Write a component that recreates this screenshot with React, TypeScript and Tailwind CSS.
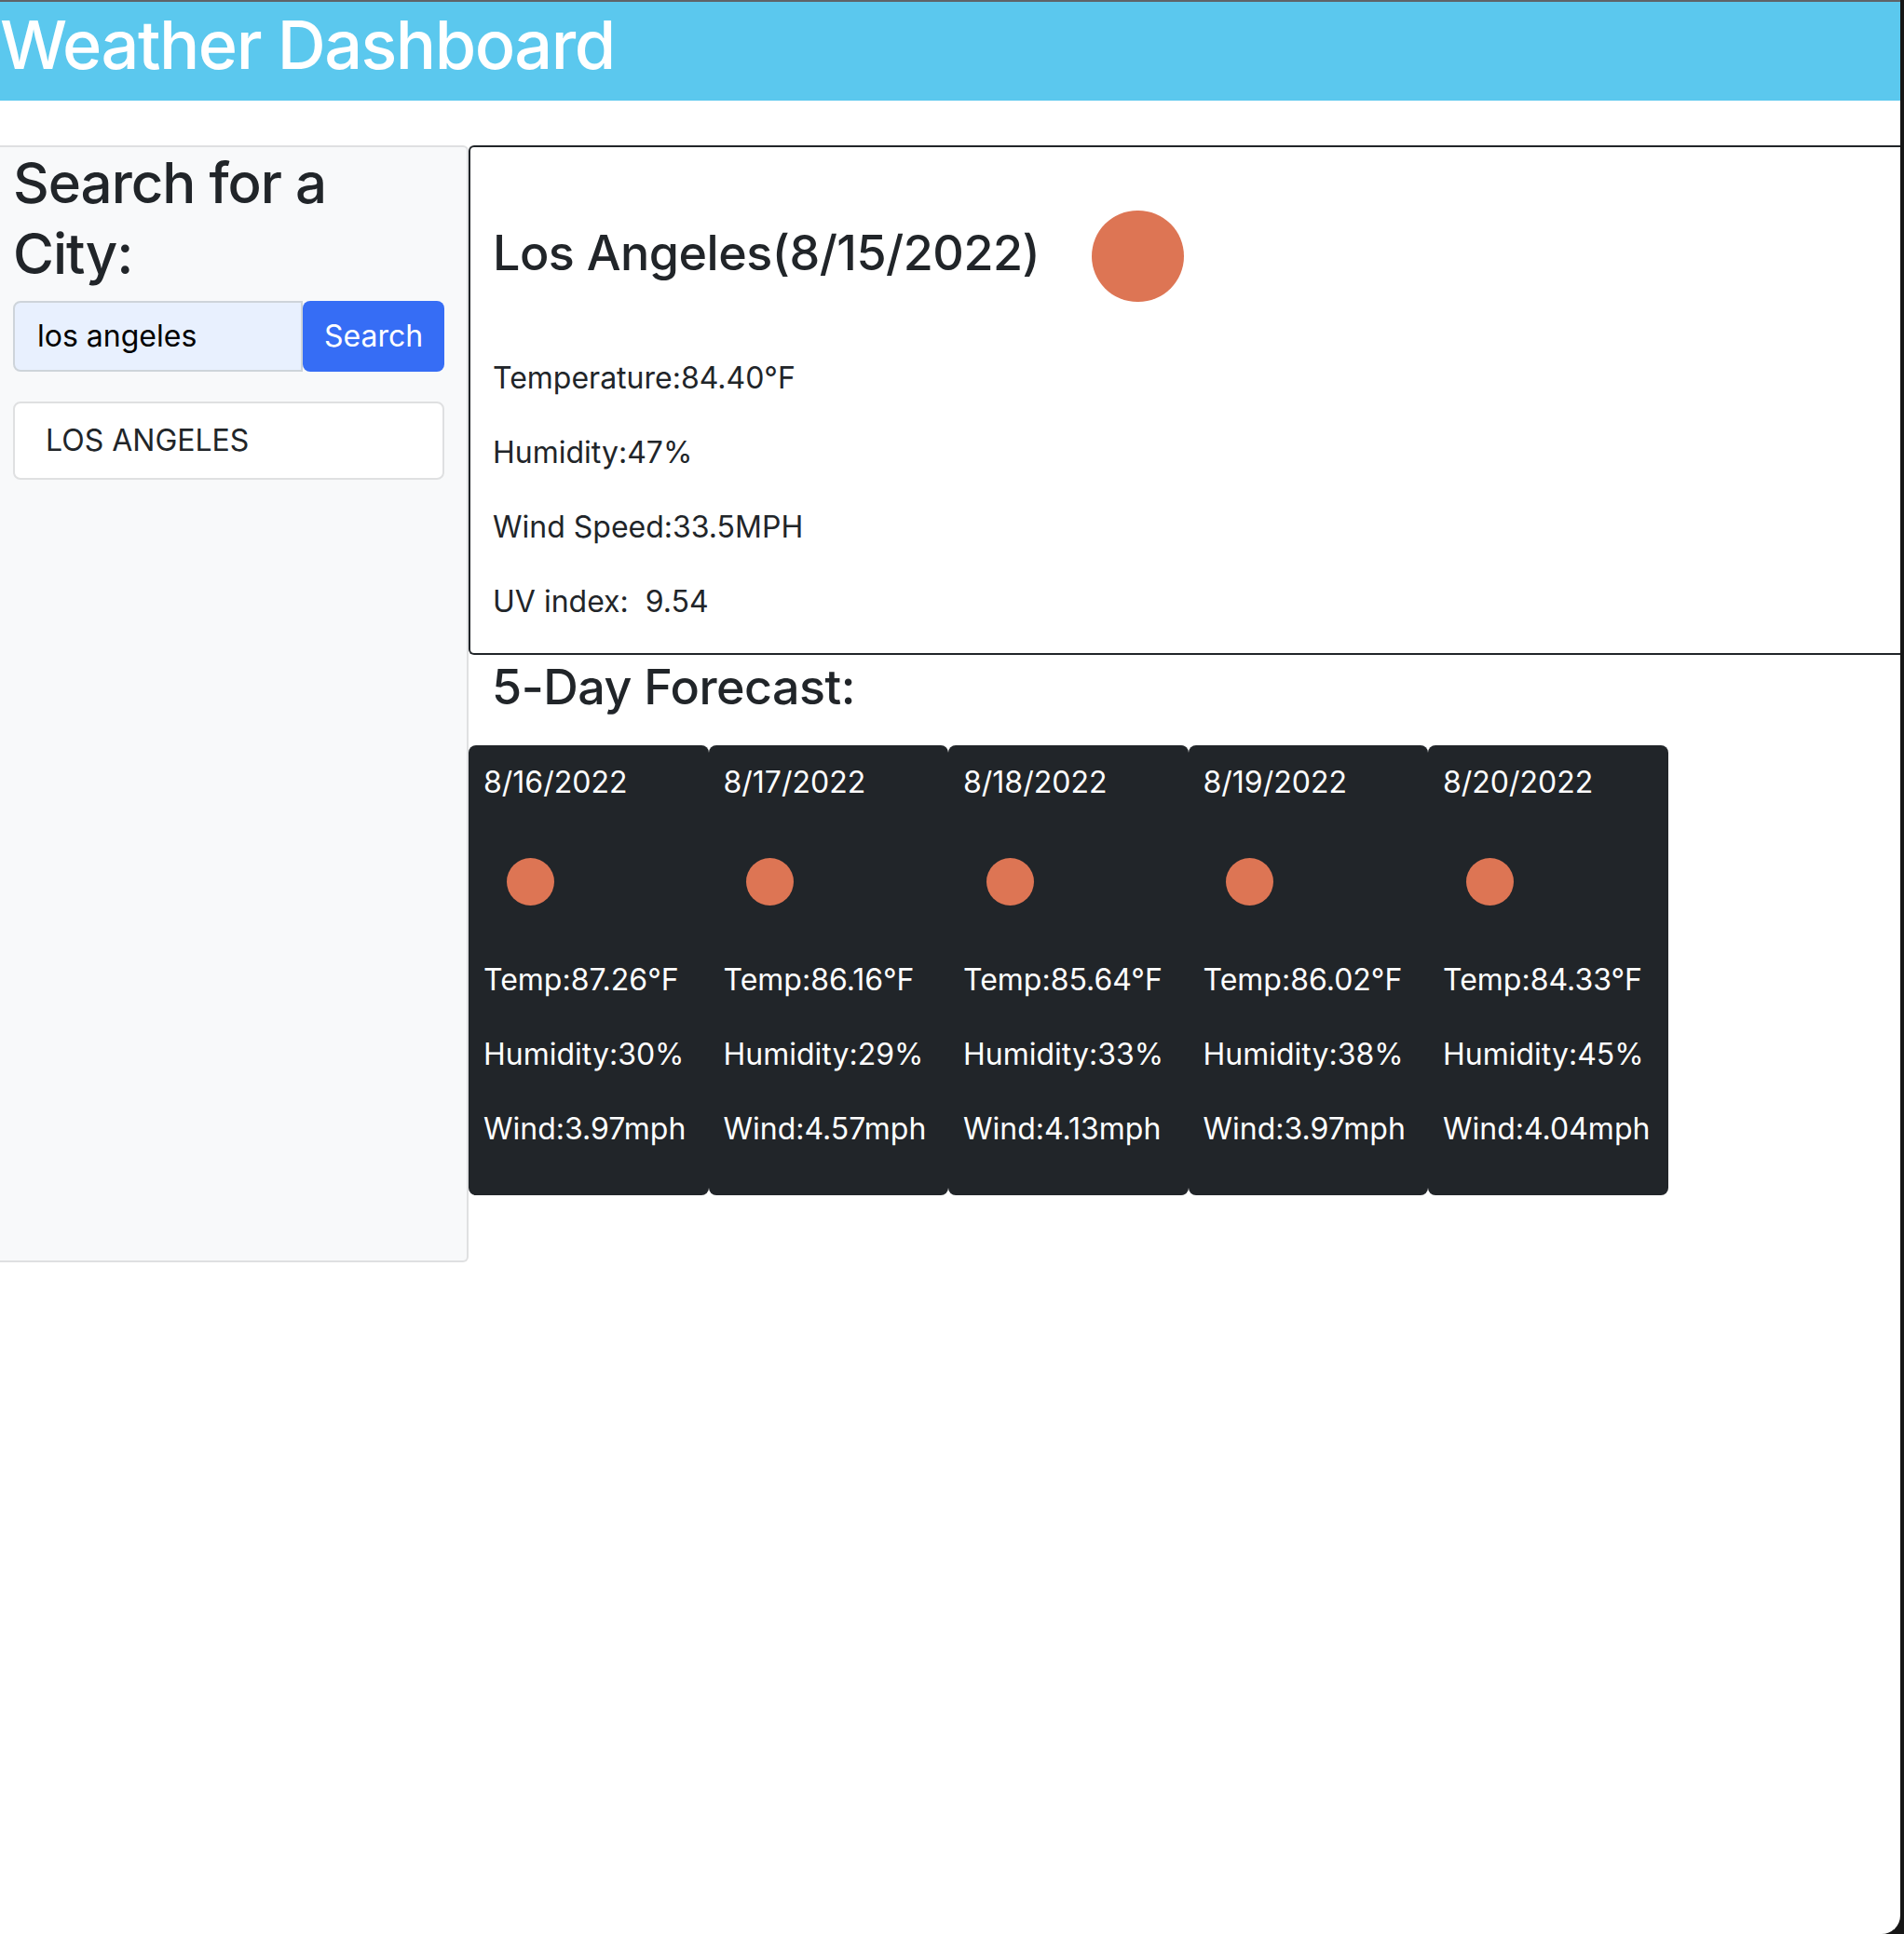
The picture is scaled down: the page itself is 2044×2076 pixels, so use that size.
import React from "react";

const forecast = [
  { date: "8/16/2022", temp: "87.26", humidity: "30", wind: "3.97" },
  { date: "8/17/2022", temp: "86.16", humidity: "29", wind: "4.57" },
  { date: "8/18/2022", temp: "85.64", humidity: "33", wind: "4.13" },
  { date: "8/19/2022", temp: "86.02", humidity: "38", wind: "3.97" },
  { date: "8/20/2022", temp: "84.33", humidity: "45", wind: "4.04" },
];

const App: React.FC = () => {
  return (
    <div className="min-h-[2076px] bg-[#161616] pr-[4px] font-['Inter',sans-serif] text-[#212529]">
      <div className="min-h-[2076px] overflow-hidden rounded-br-[20px] bg-white">
        <header className="h-[108px] border-t-2 border-[#5f6368] bg-[#5bc8ee]">
          <h1 className="text-[72px] leading-[92px] font-medium tracking-[-1.5px] text-white">Weather Dashboard</h1>
        </header>
        <main className="mt-[48px] flex items-start">
          <aside className="h-[1199px] w-[503px] shrink-0 rounded-r-[6px] border-2 border-l-0 border-[#dfe0e1] bg-[#f8f9fa] pl-[14px] pr-[24px]">
            <h2 className="text-[60px] leading-[76px] font-medium tracking-[-1px]">Search for a City:</h2>
            <div className="mt-[13px] flex h-[76px]">
              <div className="flex w-[311px] items-center rounded-l-[8px] border-2 border-[#ced4da] bg-[#e8f0fe] pl-[24px] text-[32px] text-black">
                los angeles
              </div>
              <button className="w-[152px] rounded-[8px] bg-[#366df5] text-[32px] text-white">Search</button>
            </div>
            <div className="mt-[32px] flex h-[84px] w-[463px] items-center rounded-[8px] border-2 border-[#dfe0e1] bg-white pl-[33px] text-[32px]">
              LOS ANGELES
            </div>
          </aside>
          <section className="min-w-0 flex-1">
            <div className="h-[547px] rounded-l-[6px] border-2 border-r-0 border-[#212529] pl-[24px]">
              <div className="flex items-start pt-[68px]">
                <h2 className="mt-[14px] text-[52px] leading-[64px] font-medium tracking-[-0.5px]">Los Angeles(8/15/2022)</h2>
                <div className="ml-[56px] h-[98px] w-[99px] rounded-full bg-[#dd7554]" />
              </div>
              <div className="mt-[58px] flex flex-col gap-[32px] text-[32px] leading-[48px]">
                <p>Temperature:84.40°F</p>
                <p>Humidity:47%</p>
                <p>Wind Speed:33.5MPH</p>
                <p>UV index:&nbsp; 9.54</p>
              </div>
            </div>
            <h3 className="mt-[3px] pl-[25px] text-[52px] leading-[64px] font-medium tracking-[-0.5px]">5-Day Forecast:</h3>
            <div className="mt-[30px] flex">
              {forecast.map((day) => (
                <div key={day.date} className="h-[483px] w-[257.5px] shrink-0 rounded-[8px] bg-[#212529] px-[16px] pt-[16px] text-[32px] leading-[48px] text-white">
                  <p>{day.date}</p>
                  <div className="mt-[32px] flex h-[100px] w-[100px] items-center justify-center">
                    <div className="h-[51px] w-[51px] rounded-full bg-[#dd7554]" />
                  </div>
                  <div className="mt-[32px] flex flex-col gap-[32px] whitespace-nowrap">
                    <p>Temp:{day.temp}°F</p>
                    <p>Humidity:{day.humidity}%</p>
                    <p>Wind:{day.wind}mph</p>
                  </div>
                </div>
              ))}
            </div>
          </section>
        </main>
      </div>
    </div>
  );
};

export default App;
